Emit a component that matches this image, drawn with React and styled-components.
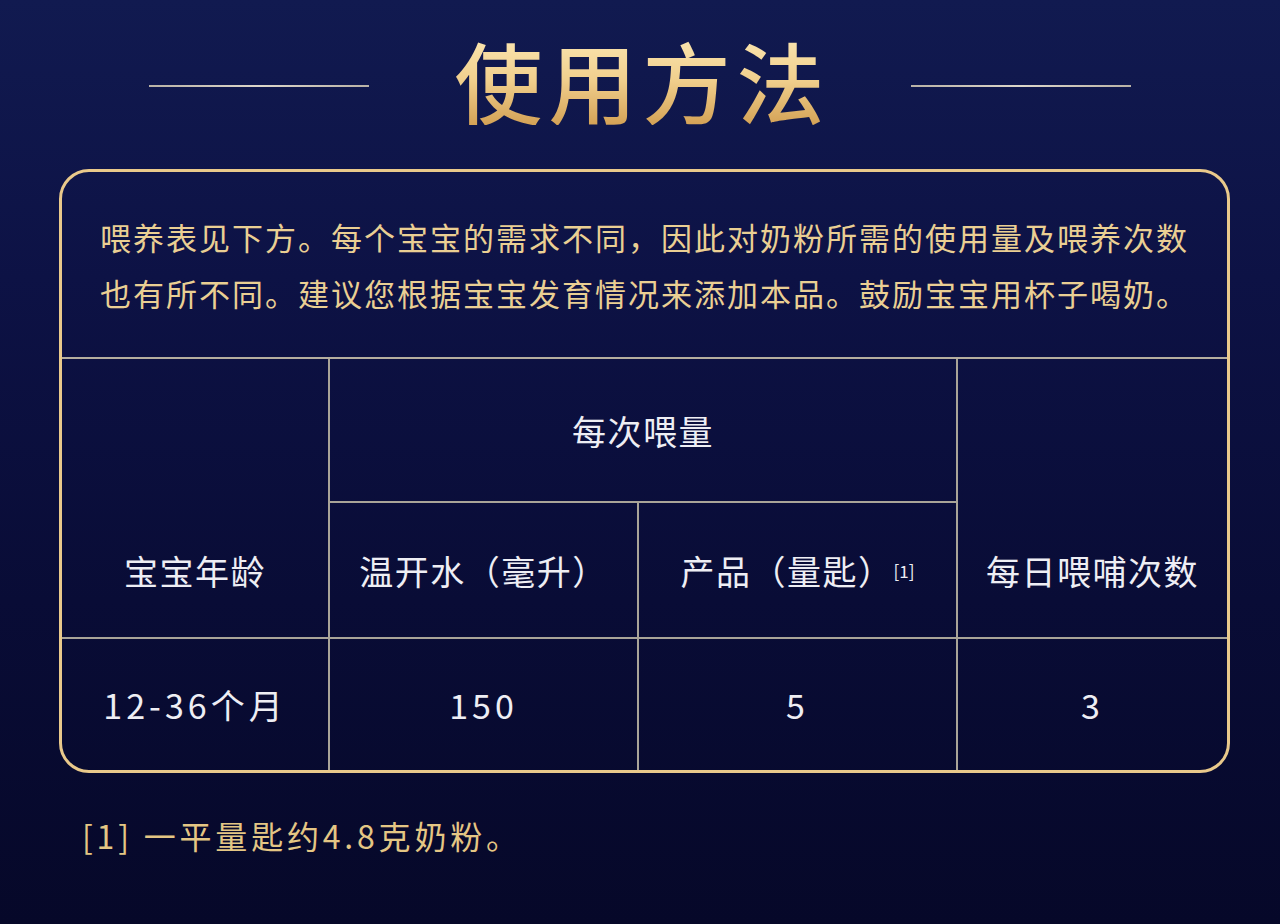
import React from 'react'
import styled, { createGlobalStyle } from 'styled-components'

const GlobalStyle = createGlobalStyle`
	html, body {
		margin: 0;
		padding: 0;
	}
	body {
		font-family: "Noto Sans CJK SC", "Noto Sans", sans-serif;
		background: #070a2e;
	}
`

const Page = styled.div`
	width: 1280px;
	height: 924px;
	box-sizing: border-box;
	padding-top: 33px;
	overflow: hidden;
	background: linear-gradient(180deg, #111a50 0%, #0d1245 30%, #090c36 65%, #060829 100%);
`

const TitleRow = styled.div`
	display: flex;
	align-items: center;
	justify-content: center;
	gap: 85px;
`

const TitleLine = styled.span`
	width: 220px;
	height: 2px;
	margin-top: 14px;
	background: linear-gradient(90deg, #b9b2a6, #dcd6ca, #b9b2a6);
`

const Title = styled.h1`
	margin: 0 -5px 0 0;
	font-size: 88px;
	line-height: 92px;
	font-weight: 500;
	letter-spacing: 6px;
	background: linear-gradient(180deg, #fbe7b3 0%, #f1d08e 50%, #d4a256 100%);
	-webkit-background-clip: text;
	background-clip: text;
	color: transparent;
`

const Card = styled.section`
	margin: 44px 50px 0 59px;
	border: 3px solid #e9c98b;
	border-radius: 30px;
	overflow: hidden;
`

const Intro = styled.p`
	margin: 0;
	padding: 37px 0 36px 38px;
	font-size: 31px;
	line-height: 56px;
	letter-spacing: 2px;
	color: #eacf93;
	border-bottom: 2px solid #b5ae9f;
`

const Table = styled.div`
	display: grid;
	grid-template-columns: 268px 309px 319px 1fr;
	grid-template-rows: 144px 136px 131px;
`

const Cell = styled.div`
	grid-column: ${p => p.$col};
	grid-row: ${p => p.$row};
	box-sizing: border-box;
	display: flex;
	align-items: center;
	justify-content: center;
	padding-top: ${p => (p.$lower ? '144px' : '0')};
	border-right: ${p => (p.$lastCol ? 'none' : '2px solid #a9a498')};
	border-bottom: ${p => (p.$lastRow ? 'none' : '2px solid #a9a498')};
	color: #eeeef4;
	font-size: 34px;
	letter-spacing: ${p => (p.$lastRow ? '4px' : '1.5px')};
	white-space: nowrap;
`

const Sup = styled.span`
	font-size: 17px;
	vertical-align: 17px;
	margin-left: 0;
	letter-spacing: 0;
`

const Footnote = styled.p`
	margin: 42px 0 0 82px;
	font-size: 32px;
	line-height: 40px;
	letter-spacing: 3.8px;
	color: #e4c684;
`

export default function App() {
	return (
		<Page>
			<GlobalStyle />
			<TitleRow>
				<TitleLine />
				<Title>使用方法</Title>
				<TitleLine />
			</TitleRow>
			<Card>
				<Intro>
					喂养表见下方。每个宝宝的需求不同，因此对奶粉所需的使用量及喂养次数
					<br />
					也有所不同。建议您根据宝宝发育情况来添加本品。鼓励宝宝用杯子喝奶。
				</Intro>
				<Table>
					<Cell $col="1" $row="1 / 3" $lower>宝宝年龄</Cell>
					<Cell $col="2 / 4" $row="1">每次喂量</Cell>
					<Cell $col="4" $row="1 / 3" $lower $lastCol>每日喂哺次数</Cell>
					<Cell $col="2" $row="2">温开水（毫升）</Cell>
					<Cell $col="3" $row="2">
						产品（量匙）<Sup>[1]</Sup>
					</Cell>
					<Cell $col="1" $row="3" $lastRow>12-36个月</Cell>
					<Cell $col="2" $row="3" $lastRow>150</Cell>
					<Cell $col="3" $row="3" $lastRow>5</Cell>
					<Cell $col="4" $row="3" $lastRow $lastCol>3</Cell>
				</Table>
			</Card>
			<Footnote>[1] 一平量匙约4.8克奶粉。</Footnote>
		</Page>
	)
}
